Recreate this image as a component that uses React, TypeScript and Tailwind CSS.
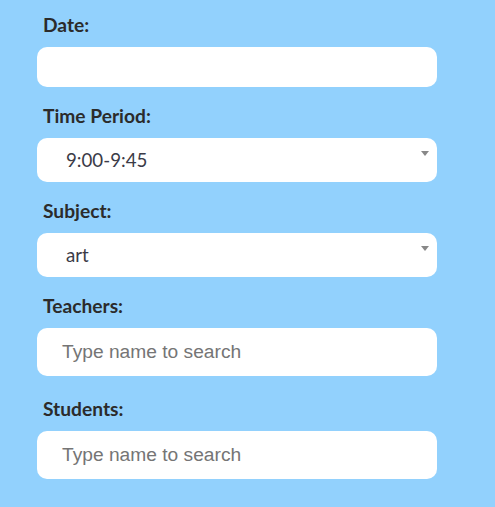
import React from "react";

const Label = ({ children, className = "" }: { children: React.ReactNode; className?: string }) => (
  <div
    className={`pl-[6px] text-[19.2px] leading-[20px] font-bold text-[#2b2b2b] ${className}`}
    style={{ fontFamily: "Lato, sans-serif" }}
  >
    {children}
  </div>
);

const Arrow = () => (
  <div className="absolute right-[8px] top-[13px] h-0 w-0 border-x-[4px] border-t-[5px] border-x-transparent border-t-[#888888]" />
);

export default function App() {
  return (
    <div className="min-h-[507px] w-[495px] bg-[#92d1fd] pl-[37px] pt-[15px]">
      <div className="flex w-[400px] flex-col">
        <Label>Date:</Label>
        <div className="mt-[12px] h-[40px] rounded-[10px] bg-white" />

        <Label className="mt-[19px]">Time Period:</Label>
        <div className="relative mt-[12px] flex h-[44px] items-center rounded-[10px] bg-white pl-[29px]">
          <span className="text-[18.7px] text-[#3b3b47]" style={{ fontFamily: "Lato, sans-serif" }}>
            9:00-9:45
          </span>
          <Arrow />
        </div>

        <Label className="mt-[19px]">Subject:</Label>
        <div className="relative mt-[12px] flex h-[44px] items-center rounded-[10px] bg-white pl-[29px]">
          <span className="text-[18.7px] text-[#3b3b47]" style={{ fontFamily: "Lato, sans-serif" }}>
            art
          </span>
          <Arrow />
        </div>

        <Label className="mt-[19px]">Teachers:</Label>
        <div className="mt-[12px] flex h-[48px] items-center rounded-[10px] bg-white pl-[25px]">
          <span className="text-[19.2px] text-[#757575]" style={{ fontFamily: "'Liberation Sans', Arial, sans-serif" }}>
            Type name to search
          </span>
        </div>

        <Label className="mt-[23px]">Students:</Label>
        <div className="mt-[12px] flex h-[48px] items-center rounded-[10px] bg-white pl-[25px]">
          <span className="text-[19.2px] text-[#757575]" style={{ fontFamily: "'Liberation Sans', Arial, sans-serif" }}>
            Type name to search
          </span>
        </div>
      </div>
    </div>
  );
}
